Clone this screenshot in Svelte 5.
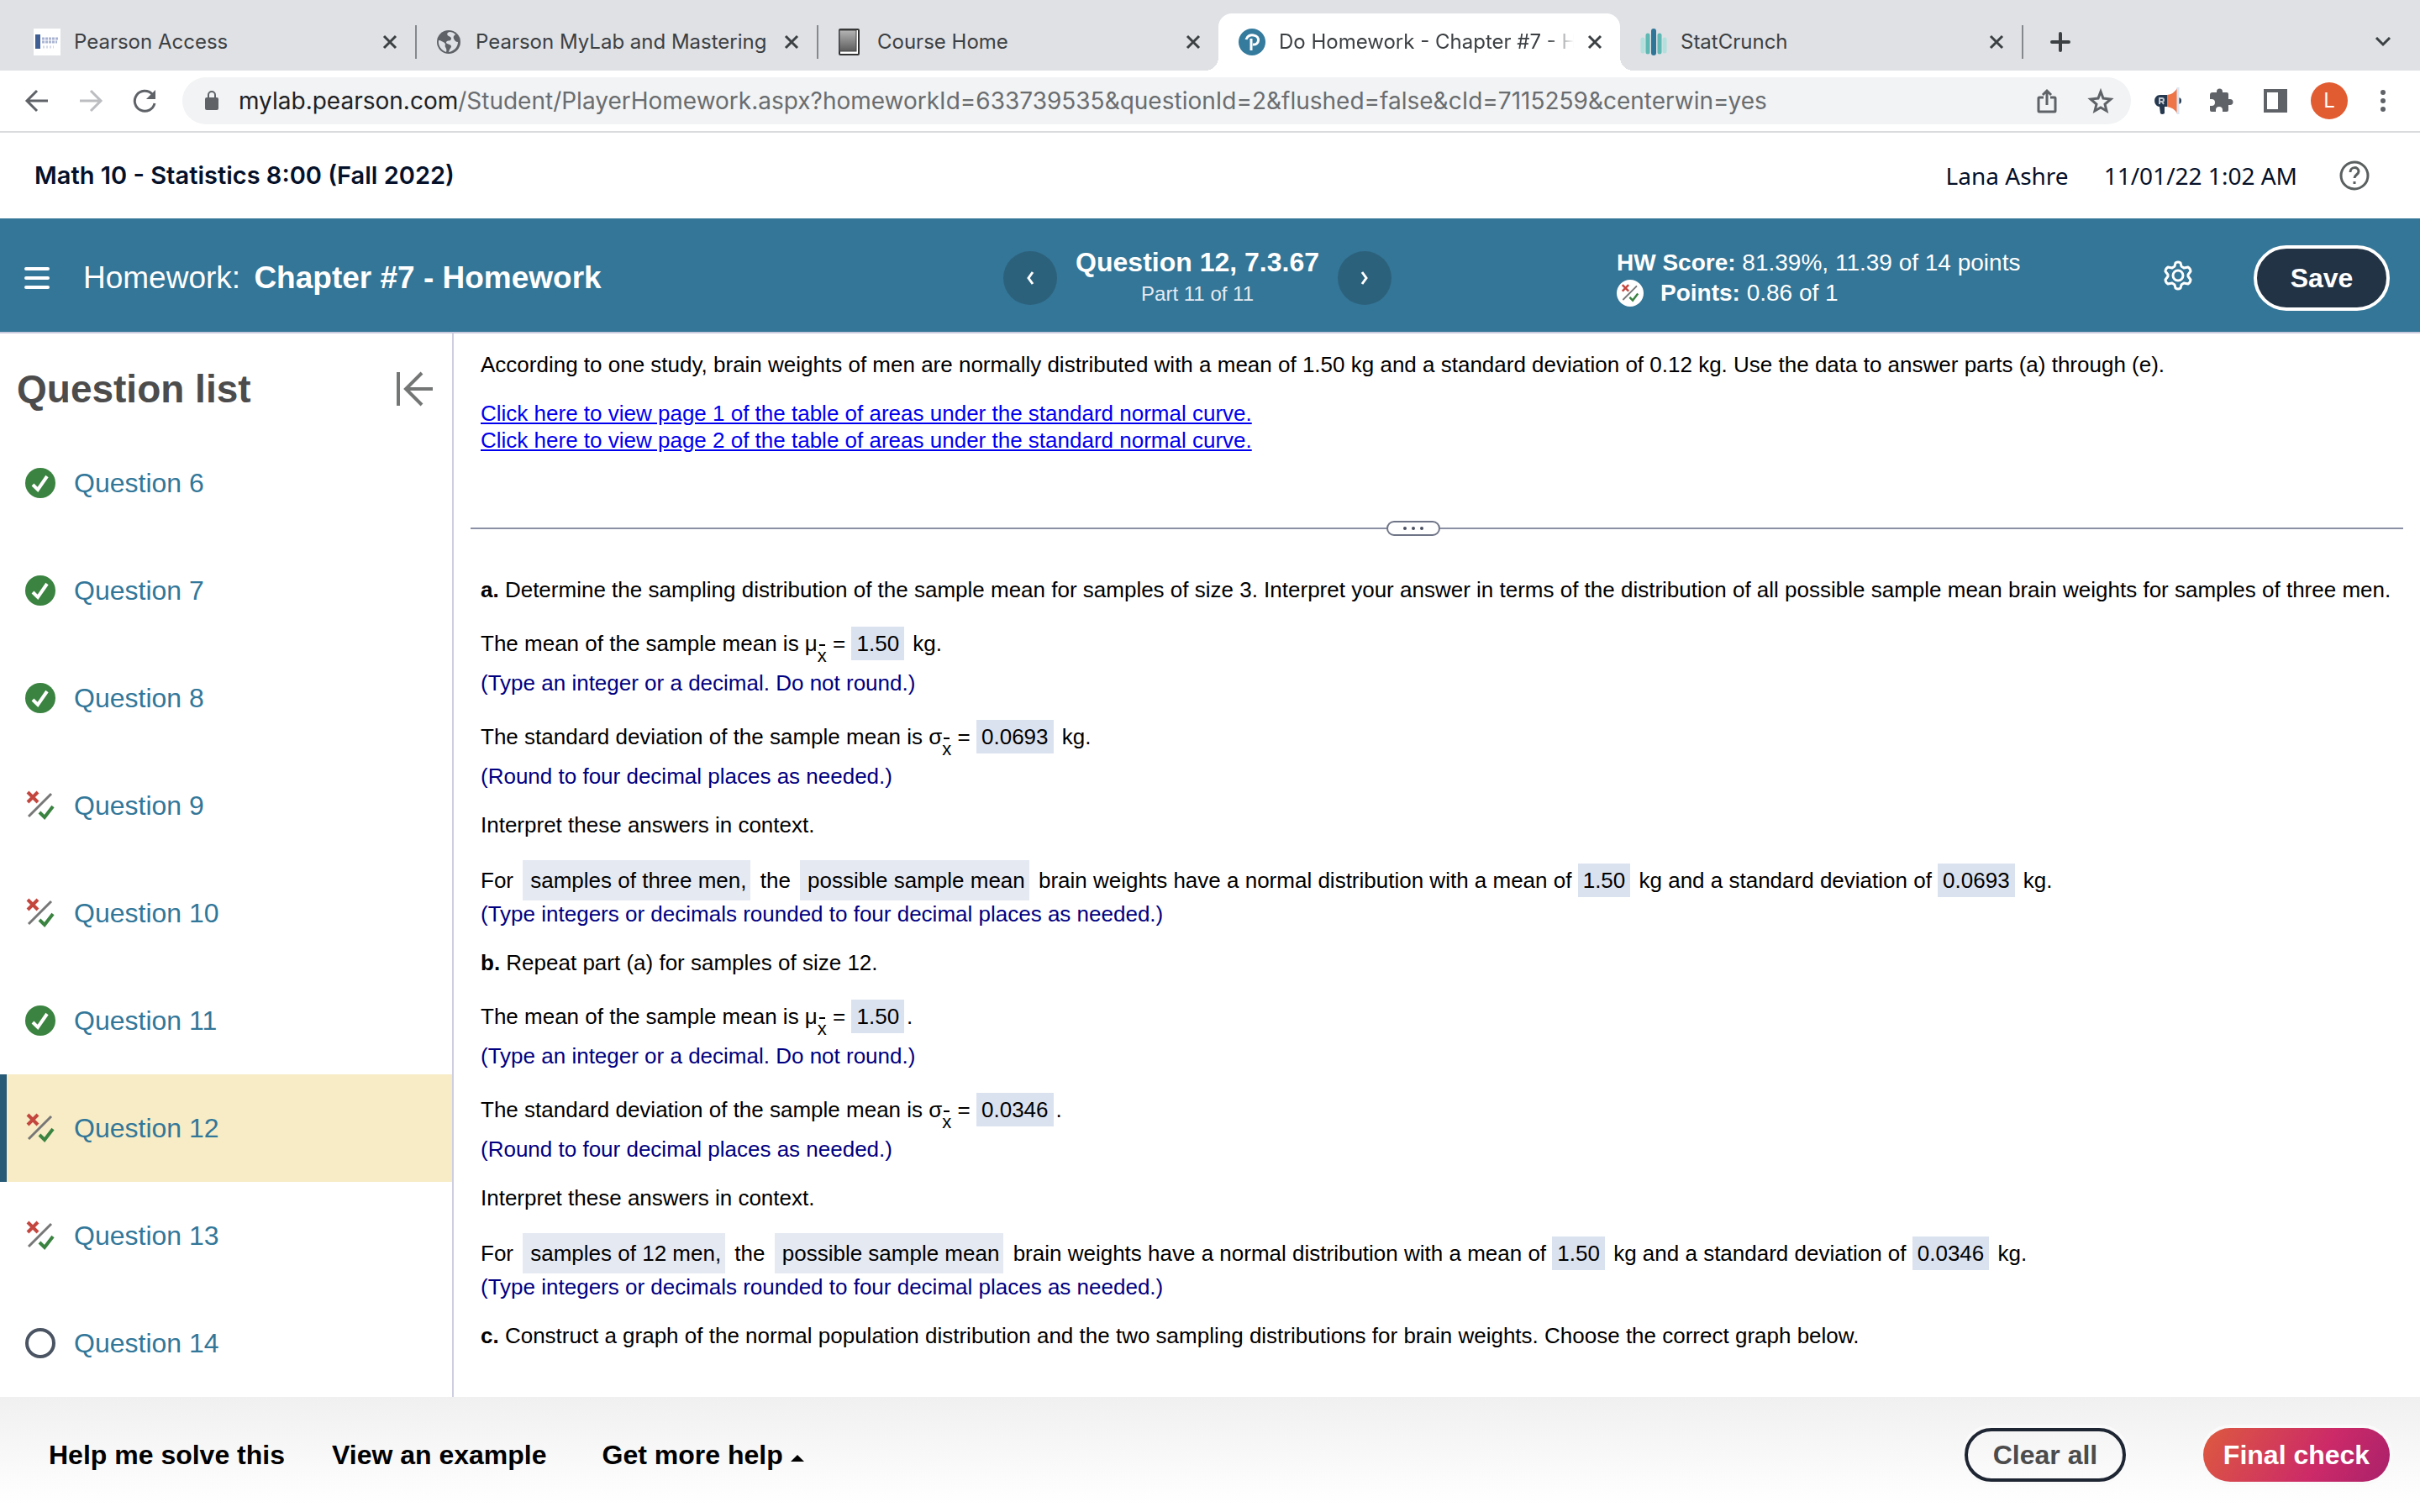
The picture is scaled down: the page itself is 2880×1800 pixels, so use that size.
<script lang="ts">
  const tabs = [
    { title: "Pearson Access", icon: "access" },
    { title: "Pearson MyLab and Mastering", icon: "globe" },
    { title: "Course Home", icon: "book" },
    { title: "Do Homework - Chapter #7 - H", icon: "pearson" },
    { title: "StatCrunch", icon: "stat" },
  ];

  const questions = [
    { id: 6, status: "correct" },
    { id: 7, status: "correct" },
    { id: 8, status: "correct" },
    { id: 9, status: "partial" },
    { id: 10, status: "partial" },
    { id: 11, status: "correct" },
    { id: 12, status: "partial" },
    { id: 13, status: "partial" },
    { id: 14, status: "open" },
  ];

  const parts = [
    {
      letter: "a.",
      prompt:
        "Determine the sampling distribution of the sample mean for samples of size 3. Interpret your answer in terms of the distribution of all possible sample mean brain weights for samples of three men.",
      mean: "1.50",
      sd: "0.0693",
      unit: " kg.",
      group: "samples of three men,",
    },
    {
      letter: "b.",
      prompt: "Repeat part (a) for samples of size 12.",
      mean: "1.50",
      sd: "0.0346",
      unit: ".",
      group: "samples of 12 men,",
    },
  ];

  let currentTab = $state(3);
  let currentQuestion = $state(12);
</script>

{#snippet partialMark()}
  <path d="m3 2 12 12M15 2 3 14" stroke="#c4473f" stroke-width="4" />
  <path d="M31 4 4 31" stroke="#777" stroke-width="3" />
  <path d="m17 26 6 6 10-13" stroke="#3a8340" stroke-width="4" />
{/snippet}

<div class="page">
  <div class="tab-strip">
    {#each tabs as tab, i}
      <div class="tab" class:active={i === currentTab} class:before-active={i === currentTab - 1}>
        <svg class="favicon" viewBox="0 0 32 32" fill="none">
          {#if tab.icon === "access"}
            <rect width="32" height="32" fill="#fff" />
            <rect x="2" y="7" width="6" height="17" fill="#3f5f94" />
            <path d="M10 12h19M10 16h18" stroke="#a9b4d2" stroke-width="3" stroke-dasharray="3 1" />
            <path d="M11 22h13" stroke="#d5d9e8" stroke-width="3" stroke-dasharray="2 2" />
          {:else if tab.icon === "globe"}
            <circle cx="16" cy="16" r="14" fill="#5f6368" />
            <path
              d="M17 4c-4 1-3 4-1 5 3 1 4 3 2 5-2 1-5 0-5 3 1 2 5 1 6 4 0 2-2 3-3 7 6-1 11-6 11-12-3 0-4-2-5-4-1-3 1-4 2-5-2-2-4-3-7-3Z"
              fill="#dee1e6"
            />
            <path d="M4 14c3 0 5 2 7 3 2 2 0 3 1 5s2 3 1 6C7 26 3 20 4 14Z" fill="#dee1e6" />
          {:else if tab.icon === "book"}
            <defs>
              <linearGradient id="cover" x2="0" y2="1">
                <stop stop-color="#b5b5b5" />
                <stop offset="1" stop-color="#5c5c5c" />
              </linearGradient>
            </defs>
            <rect x="3" y="1" width="23" height="30" rx="1" fill="#fff" stroke="#333" stroke-width="2" />
            <rect x="3" y="2" width="20" height="25" fill="url(#cover)" stroke="#444" stroke-width="1" />
          {:else if tab.icon === "pearson"}
            <circle cx="16" cy="16" r="16" fill="#357b9d" />
            <path d="M9 13c1-4 5-6 9-5 8 1 7 12-1 11M15 12v14" stroke="#fff" stroke-width="3" />
          {:else}
            <path d="M3 13v14M29 13v14" stroke="#b2e0dc" stroke-width="5" stroke-linecap="round" />
            <path d="M9 8v20M23 8v20" stroke="#5fb8b3" stroke-width="5" stroke-linecap="round" />
            <path d="M16 3v26" stroke="#2f7597" stroke-width="6" stroke-linecap="round" />
          {/if}
        </svg>
        <button class="tab-title" onclick={() => (currentTab = i)}>{tab.title}</button>
        <button class="tab-close" aria-label="Close tab">
          <svg viewBox="0 0 18 18" fill="none" stroke="#3c4043" stroke-width="3">
            <path d="m2 2 14 14M16 2 2 16" />
          </svg>
        </button>
      </div>
    {/each}
    <button class="new-tab" aria-label="New tab">
      <svg viewBox="0 0 24 24" stroke="#3c4043" stroke-width="4" stroke-linecap="round">
        <path d="M12 2v20M2 12h20" />
      </svg>
    </button>
    <button class="tab-search" aria-label="Search tabs">
      <svg viewBox="0 0 20 12" fill="none" stroke="#3c4043" stroke-width="3">
        <path d="m2 1 8 8 8-8" />
      </svg>
    </button>
  </div>

  <div class="toolbar">
    <button aria-label="Back">
      <svg class="tool" viewBox="0 0 32 32" fill="none" stroke="#5f6368" stroke-width="3">
        <path d="M29 16H5M16 4 4 16l12 12" />
      </svg>
    </button>
    <button aria-label="Forward">
      <svg class="tool" viewBox="0 0 32 32" fill="none" stroke="#bbbdc0" stroke-width="3">
        <path d="M3 16h24M16 4l12 12-12 12" />
      </svg>
    </button>
    <button aria-label="Reload">
      <svg class="tool" viewBox="0 0 32 32" fill="none" stroke="#5f6368" stroke-width="3">
        <path d="M25 8a12 12 0 1 0 3 11" />
        <path d="M29 3v11H18Z" fill="#5f6368" stroke="none" />
      </svg>
    </button>
    <div class="omnibox">
      <svg class="lock" viewBox="0 0 16 24" fill="none">
        <rect y="8" width="16" height="15" rx="2" fill="#5f6368" />
        <path d="M4 9V5a4 4 0 0 1 8 0v4" stroke="#5f6368" stroke-width="2" />
      </svg>
      <p class="url">
        <span>mylab.pearson.com</span
        >/Student/PlayerHomework.aspx?homeworkId=633739535&amp;questionId=2&amp;flushed=false&amp;cId=7115259&amp;centerwin=yes
      </p>
      <button aria-label="Share">
        <svg class="tool" viewBox="0 0 32 32" fill="none" stroke="#5f6368" stroke-width="3">
          <path d="M12 12H7q-1 0-1 1v15q0 1 1 1h18q1 0 1-1V13q0-1-1-1h-5M16 21V4M11 9l5-5 5 5" />
        </svg>
      </button>
      <button aria-label="Bookmark">
        <svg class="tool" viewBox="0 0 32 32" fill="none" stroke="#5f6368" stroke-width="3">
          <path d="m16 5 3 8 9 1-7 6 2 8-7-4-7 4 2-8-7-6 9-1Z" />
        </svg>
      </button>
    </div>
    <div class="extensions">
      <button aria-label="Read aloud">
        <svg class="tool" viewBox="0 0 32 32">
          <circle cx="28" cy="16" r="4" fill="#26394f" />
          <path d="M15 9v14h-3v8q-3 2-5 0l-1-8C-2 22-2 9 7 9Z" fill="#26394f" />
          <path d="M15 9q8-1 12-8v30q-4-7-12-8Z" fill="#ee7548" />
          <path d="M28 0v32" stroke="#dbe6f3" stroke-width="3" />
          <path d="M6 20v-7h3a2 2 0 0 1 0 4H6m3 0 2 3" fill="none" stroke="#c3c8d0" stroke-width="2" />
        </svg>
      </button>
      <button aria-label="Extensions">
        <svg class="tool" viewBox="0 0 32 32" fill="#5f6368">
          <path
            d="M2 9q0-3 3-3h5V5a3 3 0 0 1 7 0v1h5q2 0 2 2v6h2a3 3 0 0 1 0 7h-2v6q0 2-2 2h-5v-2a4 4 0 0 0-8 0v2H4q-2 0-2-2v-5h2a4 4 0 0 0 0-8H2Z"
          />
        </svg>
      </button>
      <button aria-label="Side panel">
        <svg class="tool" viewBox="0 0 32 32">
          <path d="M2 2h28v28H2ZM6 6v20h13V6Z" fill="#5f6368" fill-rule="evenodd" />
        </svg>
      </button>
      <button class="avatar">L</button>
      <button aria-label="Menu">
        <svg class="tool" viewBox="0 0 32 32" fill="#5f6368">
          <circle cx="16" cy="6" r="3" />
          <circle cx="16" cy="16" r="3" />
          <circle cx="16" cy="26" r="3" />
        </svg>
      </button>
    </div>
  </div>

  <header class="course">
    <h1>Math 10 - Statistics 8:00 (Fall 2022)</h1>
    <span class="user">Lana Ashre</span>
    <span class="user">11/01/22 1:02 AM</span>
    <button class="help" aria-label="Help">
      <svg viewBox="0 0 36 36" fill="none" stroke="#5a5f5f" stroke-width="3">
        <circle cx="18" cy="18" r="16" />
        <path d="M13 14c0-7 10-7 10-1 0 4-5 4-5 8" />
        <path d="M18 25v3" />
      </svg>
    </button>
  </header>

  <div class="assignment">
    <button class="menu" aria-label="Open menu">
      <svg viewBox="0 0 30 26" stroke="#fff" stroke-width="4" stroke-linecap="round">
        <path d="M2 2h26M2 13h26M2 24h26" />
      </svg>
    </button>
    <h2><span>Homework:</span> Chapter #7 - Homework</h2>
    <nav>
      <button class="round" aria-label="Previous question">
        <svg viewBox="0 0 12 18" fill="none" stroke="#fff" stroke-width="3"><path d="M9 2 4 9l5 7" /></svg>
      </button>
      <div class="position">
        <strong>Question 12, 7.3.67</strong>
        <span>Part 11 of 11</span>
      </div>
      <button class="round" aria-label="Next question">
        <svg viewBox="0 0 12 18" fill="none" stroke="#fff" stroke-width="3"><path d="m3 2 5 7-5 7" /></svg>
      </button>
    </nav>
    <div class="score">
      <p><b>HW Score:</b> 81.39%, 11.39 of 14 points</p>
      <p>
        <svg class="points-icon" viewBox="-8 -8 52 52" fill="none">
          <circle cx="18" cy="18" r="26" fill="#fff" />
          {@render partialMark()}
        </svg>
        <b>Points:</b>&nbsp;0.86 of 1
      </p>
    </div>
    <button class="gear" aria-label="Settings">
      <svg viewBox="0 0 36 36" fill="none" stroke="#fff" stroke-width="3" stroke-linejoin="round">
        <path
          d="M15 3q3-2 6 0l1 4 3 2 5-1q3 2 3 5l-3 4v2l3 4q0 3-3 5l-5-1-3 2-1 4q-3 2-6 0l-1-4-3-2-5 1q-3-2-3-5l3-4v-2l-3-4q0-3 3-5l5 1 3-2Z"
        />
        <circle cx="18" cy="18" r="6" />
      </svg>
    </button>
    <button class="save">Save</button>
  </div>

  <div class="body">
    <aside>
      <div class="list-title">
        <h3>Question list</h3>
        <button aria-label="Collapse list">
          <svg viewBox="0 0 44 42" fill="none" stroke="#747676" stroke-width="4">
            <path d="M2 1v40M43 21H11M30 2 11 21l19 19" />
          </svg>
        </button>
      </div>
      <ul>
        {#each questions as question}
          <li class:selected={question.id === currentQuestion}>
            <button onclick={() => (currentQuestion = question.id)}>
              <svg class="status" viewBox="0 0 36 36" fill="none">
                {#if question.status === "correct"}
                  <circle cx="18" cy="18" r="18" fill="#3a8340" />
                  <path d="m9 20 6 6L26 10" stroke="#fff" stroke-width="4" />
                {:else if question.status === "partial"}
                  {@render partialMark()}
                {:else}
                  <circle cx="18" cy="18" r="16" stroke="#4a5462" stroke-width="4" />
                {/if}
              </svg>
              Question {question.id}
            </button>
          </li>
        {/each}
      </ul>
    </aside>

    <main>
      <p>
        According to one study, brain weights of men are normally distributed with a mean of 1.50 kg and a
        standard deviation of 0.12 kg. Use the data to answer parts (a) through (e).
      </p>
      <p class="links">
        <a href="#page1">Click here to view page 1 of the table of areas under the standard normal curve.</a><br />
        <a href="#page2">Click here to view page 2 of the table of areas under the standard normal curve.</a>
      </p>

      <div class="divider">
        <button aria-label="Resize panels"><i></i><i></i><i></i></button>
      </div>

      {#each parts as part}
        <section>
          <p><b>{part.letter}</b> {part.prompt}</p>
          <p class="answer">
            The mean of the sample mean is μ<span class="xbar">x</span> =
            <span class="value">{part.mean}</span>{part.unit}
          </p>
          <p class="hint">(Type an integer or a decimal. Do not round.)</p>
          <p class="answer">
            The standard deviation of the sample mean is σ<span class="xbar">x</span> =
            <span class="value">{part.sd}</span>{part.unit}
          </p>
          <p class="hint">(Round to four decimal places as needed.)</p>
          <p class="gap">Interpret these answers in context.</p>
          <p class="context">
            For <span class="choice">{part.group}</span> the <span class="choice">possible sample mean</span> brain
            weights have a normal distribution with a mean of <span class="value">{part.mean}</span> kg and a standard
            deviation of <span class="value">{part.sd}</span> kg.
          </p>
          <p class="note">(Type integers or decimals rounded to four decimal places as needed.)</p>
        </section>
      {/each}

      <p>
        <b>c.</b> Construct a graph of the normal population distribution and the two sampling distributions for brain
        weights. Choose the correct graph below.
      </p>
    </main>
  </div>

  <footer>
    <button class="plain">Help me solve this</button>
    <button class="plain">View an example</button>
    <button class="plain more">
      Get more help
      <svg viewBox="0 0 16 8"><path d="M8 0l8 8H0Z" /></svg>
    </button>
    <button class="clear">Clear all</button>
    <button class="check">Final check</button>
  </footer>
</div>

<style>
  :global(body) {
    margin: 0;
    background: #fff;
  }

  * {
    box-sizing: border-box;
  }

  h1,
  h2,
  h3,
  p,
  ul {
    margin: 0;
    padding: 0;
  }

  button {
    padding: 0;
    border: none;
    background: none;
    font: inherit;
    color: inherit;
    cursor: pointer;
  }

  svg {
    display: block;
    flex: none;
  }

  .page {
    min-height: 100vh;
    display: flex;
    flex-direction: column;
    font-family: "Liberation Sans", Arial, sans-serif;
    font-size: 26px;
    line-height: 32px;
  }

  /* browser chrome */
  .tab-strip {
    height: 84px;
    padding: 16px 34px 0 16px;
    display: flex;
    align-items: center;
    background: #dfe1e5;
    color: #3c4043;
    font-family: Inter, sans-serif;
    font-size: 24px;
  }

  .tab {
    position: relative;
    flex: 0 1 478px;
    min-width: 0;
    height: 68px;
    padding: 0 21px 0 24px;
    display: flex;
    align-items: center;
    gap: 16px;
  }

  .tab:not(.active, .before-active)::after {
    content: "";
    position: absolute;
    right: -2px;
    top: 14px;
    width: 2px;
    height: 40px;
    background: #85888c;
  }

  .tab.active {
    background: #fff;
    border-radius: 16px 16px 0 0;
  }

  .tab.active::before,
  .tab.active::after {
    content: "";
    position: absolute;
    bottom: 0;
    width: 16px;
    height: 16px;
  }

  .tab.active::before {
    left: -16px;
    background: radial-gradient(circle at 0 0, transparent 16px, #fff 16px);
  }

  .tab.active::after {
    right: -16px;
    background: radial-gradient(circle at 100% 0, transparent 16px, #fff 16px);
  }

  .favicon {
    width: 32px;
    height: 32px;
  }

  .tab-title {
    flex: 1;
    overflow: hidden;
    white-space: nowrap;
    text-align: left;
  }

  .tab.active .tab-title {
    mask-image: linear-gradient(to right, #000 calc(100% - 32px), transparent);
  }

  .tab-close svg {
    width: 18px;
    height: 18px;
  }

  .new-tab {
    margin-left: 34px;
  }

  .new-tab svg {
    width: 24px;
    height: 24px;
  }

  .tab-search {
    margin-left: auto;
  }

  .tab-search svg {
    width: 20px;
    height: 12px;
  }

  .toolbar {
    height: 74px;
    padding: 0 28px;
    display: flex;
    align-items: center;
    gap: 32px;
    border-bottom: 2px solid #dadbdd;
    font-family: Inter, sans-serif;
  }

  .tool {
    width: 32px;
    height: 32px;
  }

  .omnibox {
    flex: 1;
    min-width: 0;
    height: 56px;
    margin-left: -3px;
    padding: 0 20px 0 27px;
    display: flex;
    align-items: center;
    gap: 32px;
    border-radius: 28px;
    background: #f1f3f4;
  }

  .lock {
    width: 16px;
    height: 24px;
  }

  .url {
    flex: 1;
    min-width: 0;
    margin-left: -8px;
    overflow: hidden;
    white-space: nowrap;
    font-size: 28px;
    color: #6a6d70;
  }

  .url span {
    color: #202124;
  }

  .extensions {
    display: flex;
    align-items: center;
    gap: 32px;
    margin-left: -4px;
  }

  .avatar {
    width: 44px;
    height: 44px;
    margin: 0 -6px;
    border-radius: 50%;
    background: #e25c32;
    color: #fff;
    font-size: 24px;
  }

  /* course header */
  .course {
    height: 102px;
    padding: 0 60px 0 41px;
    display: flex;
    align-items: center;
    gap: 42px;
    color: #05112a;
  }

  h1 {
    margin-right: auto;
    font-family: Inter, sans-serif;
    font-size: 29px;
    font-weight: 600;
  }

  .user {
    font-family: "Noto Sans", sans-serif;
    font-size: 28px;
  }

  .help {
    margin-left: 8px;
  }

  .help svg {
    width: 36px;
    height: 36px;
  }

  .assignment {
    height: 137px;
    padding: 6px 36px 0 29px;
    display: flex;
    align-items: center;
    border-bottom: 2px solid #c9cadd;
    background: #347697;
    color: #fff;
  }

  .menu svg {
    width: 30px;
    height: 26px;
  }

  h2 {
    flex: 1;
    padding-left: 40px;
    font-size: 37px;
    white-space: nowrap;
  }

  h2 span {
    margin-right: 6px;
    font-weight: 400;
  }

  nav {
    display: flex;
    align-items: center;
    gap: 22px;
    margin-right: 268px;
  }

  .round {
    width: 64px;
    height: 64px;
    display: grid;
    place-items: center;
    border-radius: 50%;
    background: #2c617c;
  }

  .round svg {
    width: 12px;
    height: 18px;
  }

  .position {
    display: flex;
    flex-direction: column;
    align-items: center;
    line-height: 38px;
  }

  .position strong {
    font-size: 32px;
  }

  .position span {
    font-size: 24px;
    color: #e4eaf2;
  }

  .score {
    width: 650px;
    font-size: 28px;
    line-height: 36px;
  }

  .score p {
    display: flex;
    align-items: center;
    white-space: pre;
  }

  .points-icon {
    width: 32px;
    height: 32px;
    margin-right: 20px;
  }

  .gear {
    margin-bottom: 5px;
  }

  .gear svg {
    width: 36px;
    height: 36px;
  }

  .save {
    width: 162px;
    height: 78px;
    margin-left: 72px;
    border: 4px solid #fff;
    border-radius: 39px;
    background: #223345;
    font-size: 32px;
    font-weight: 700;
  }

  .body {
    flex: 1;
    display: flex;
  }

  aside {
    flex: 0 0 540px;
    border-right: 2px solid #cdcfe0;
  }

  .list-title {
    height: 114px;
    padding: 17px 22px 0 20px;
    display: flex;
    align-items: center;
    justify-content: space-between;
    color: #4c4c4c;
  }

  h3 {
    font-size: 46px;
  }

  .list-title svg {
    width: 44px;
    height: 42px;
  }

  ul {
    list-style-type: none;
  }

  li button {
    width: 100%;
    height: 128px;
    padding-left: 22px;
    display: flex;
    align-items: center;
    gap: 22px;
    border-left: 8px solid transparent;
    font-size: 32px;
    color: #327799;
  }

  li.selected button {
    border-color: #275a77;
    background: #f7ecc5;
  }

  .status {
    width: 36px;
    height: 36px;
  }

  main {
    flex: 1;
    min-width: 0;
    padding: 21px 20px 0 32px;
  }

  .links {
    margin-top: 26px;
  }

  a {
    color: #0000ee;
  }

  .divider {
    height: 2px;
    margin: 88px 0 56px -12px;
    display: flex;
    align-items: center;
    justify-content: center;
    background: #8b90a5;
  }

  .divider button {
    flex: none;
    width: 64px;
    height: 18px;
    margin-right: 56px;
    display: flex;
    align-items: center;
    justify-content: center;
    gap: 6px;
    border: 2px solid #6f7587;
    border-radius: 9px;
    background: #fff;
  }

  .divider i {
    width: 4px;
    height: 4px;
    border-radius: 50%;
    background: #4a5062;
  }

  section {
    margin-bottom: 26px;
  }

  .answer {
    margin-top: 28px;
    line-height: 40px;
  }

  .hint {
    margin-top: 11px;
    color: #000080;
  }

  .note {
    color: #000080;
  }

  .gap {
    margin: 26px 0;
  }

  .context {
    line-height: 48px;
  }

  /* subscript x with a short bar over it */
  .xbar {
    position: relative;
    display: inline-block;
    vertical-align: -13px;
    font-size: 22px;
    line-height: 10px;
  }

  .xbar::before {
    content: "";
    position: absolute;
    top: -9px;
    left: 2px;
    width: 7px;
    height: 2px;
    background: #000;
  }

  .value {
    display: inline-block;
    padding: 0 6px;
    margin-right: 3px;
    background: #dbe2ef;
    line-height: 40px;
  }

  .choice {
    display: inline-block;
    margin: 0 4px;
    padding: 0 5px 0 9px;
    background: #e5e9f2;
  }

  footer {
    height: 137px;
    padding: 0 36px 0 58px;
    display: flex;
    align-items: center;
    background: linear-gradient(#f0f0f0, #fff 94%);
    font-size: 32px;
    font-weight: 700;
  }

  .plain {
    display: flex;
    align-items: center;
    gap: 9px;
    margin-right: 56px;
  }

  .more {
    padding-left: 10px;
  }

  .plain svg {
    width: 16px;
    height: 8px;
    margin-top: 8px;
  }

  .clear,
  .check {
    height: 64px;
    border-radius: 32px;
    box-shadow: 0 0 0 4px #fafafa;
  }

  .clear {
    width: 192px;
    margin-left: auto;
    border: 4px solid #1f2633;
    color: #4c4c4c;
  }

  .check {
    width: 222px;
    margin-left: 92px;
    background: linear-gradient(120deg, #dd5a3f, #cc2a68 62%, #a9216b);
    color: #fff;
  }
</style>
